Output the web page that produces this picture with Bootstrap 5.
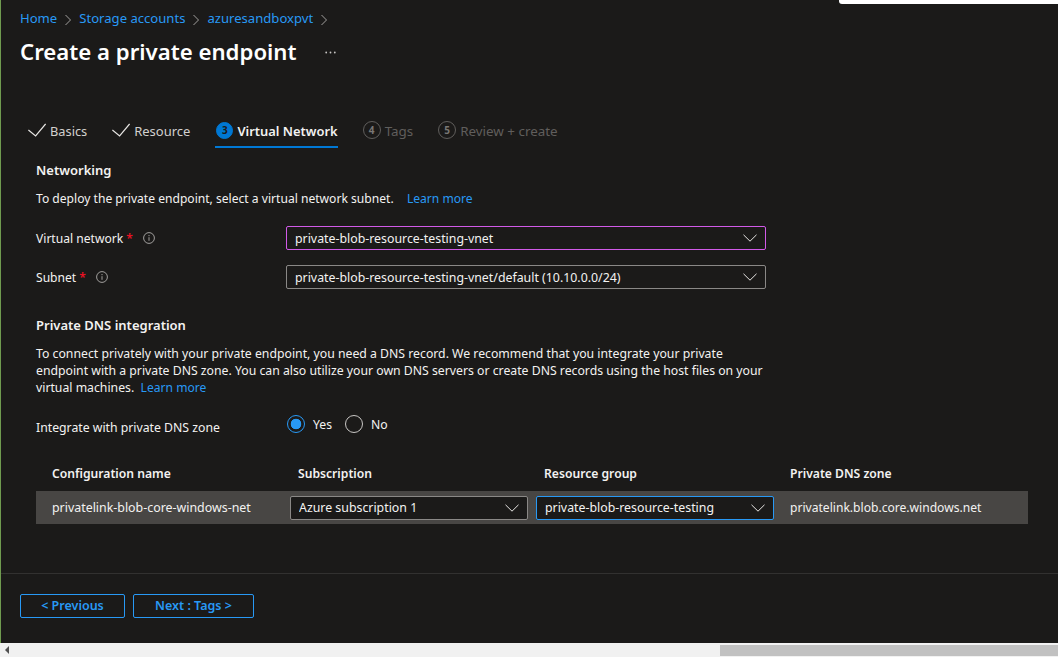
<!DOCTYPE html>
<html lang="en">
<head>
<meta charset="utf-8">
<title>Create a private endpoint</title>
<link href="https://cdn.jsdelivr.net/npm/bootstrap@5.3.0/dist/css/bootstrap.min.css" rel="stylesheet">
<style>
html,body{height:100%;overflow:hidden}
body{background:#1b1a19;color:#f3f2f1;font-family:"Noto Sans","Open Sans","Liberation Sans",sans-serif;font-size:12.2px;line-height:18px}
a{color:#2899f5;text-decoration:none}
.shell{height:657px;position:relative}
.notch{position:absolute;top:0;right:0;width:219px;height:4px;background:#fff;border-bottom-left-radius:3px}
.page-main{height:643px;padding:0 30px 0 19px;border-left:1px solid #6f9b4f}
.crumbs{--bs-breadcrumb-divider:url("data:image/svg+xml,%3Csvg xmlns='http://www.w3.org/2000/svg' width='8' height='12'%3E%3Cpath d='M1.5 1l5 5-5 5' fill='none' stroke='%23a19f9d'/%3E%3C/svg%3E");--bs-breadcrumb-item-padding-x:7px;--bs-breadcrumb-margin-bottom:0;padding-top:9px;height:27px;font-size:13.1px}
.crumbs .breadcrumb-item+.breadcrumb-item::before{padding-top:3px}
.page-title{font-size:22.2px;font-weight:600;line-height:32px;margin:9px 0 0;color:#fff}
.more-dots{width:11px;height:3px;margin:9px 0 0 28px;flex:none}
.wizard{margin-top:46px;height:34px;gap:25px}
.wizard .nav-link{padding:2px 0 0;height:34px;display:flex;align-items:center;gap:4px;color:#d2d0ce;border-bottom:2px solid transparent;font-size:12.8px}
.wizard .nav-link svg{margin-bottom:2px}
.wizard .second-step .nav-link{font-size:13px}
.wizard .nav-link.active{color:#f3f2f1;font-weight:600;border-bottom-color:#0078d4;font-size:12.9px}
.wizard .nav-link.disabled{color:#605e5c;font-size:13.4px}
.wizard .first-step{margin-left:8px}
.step-num{width:18px;height:18px;margin-bottom:2px;border-radius:50%;display:flex;align-items:center;justify-content:center;font-size:10px;font-weight:700;border:1px solid #605e5c;color:#797775}
.active .step-num{width:17px;height:17px;margin-left:1px;background:#0078d4;border-color:#0078d4;color:#1b1a19}
.form-area{padding-left:16px}
.sect-head{font-size:13px;font-weight:600;line-height:20px;margin:0}
.net-head{margin-top:12px}
.intro-a{margin:10px 0 0;font-size:12.1px}
.intro-a a{margin-left:7px}
.field-row{display:flex;align-items:center;height:24px}
.vnet-row{margin-top:18px}
.subnet-row{margin-top:15px}
.field-label{width:250px;display:flex;align-items:center;gap:3px;font-size:12.1px}
.field-row .field-label{padding-top:2px}
.field-row .info-dot{margin-bottom:2px}
.req{color:#e81123;font-weight:600}
.info-dot{width:12px;height:12px;margin-left:7px;flex:none}
.dark-select.form-select{height:24px;min-height:0;padding:0 30px 0 8px;font-size:12.35px;line-height:20px;color:#f3f2f1;background-color:#1b1a19;border:1px solid #8a8886;border-radius:2px;background-image:url("data:image/svg+xml,%3Csvg xmlns='http://www.w3.org/2000/svg' width='14' height='8'%3E%3Cpath d='M.5.8L7 7.2 13.5.8' fill='none' stroke='%23e8e6e4'/%3E%3C/svg%3E");background-size:14px 8px;background-position:right 8px center}
.dark-select.form-select.wide-sel{width:480px;padding-top:2px}
.dark-select.is-pink{border-color:#d15ae8}
.dark-select.is-blue{border-color:#2899f5}
.dns-head{margin-top:26px}
.intro-b{width:735px;margin:10px 0 0;font-size:12.25px;line-height:17px}
.intro-b a{font-size:12.1px}
.radio-row{display:flex;align-items:flex-start;margin-top:19px;height:36px}
.radio-row .field-label{margin-top:4px;font-size:12.25px}
.radio-row .form-check{margin:0 0 0 1px;padding:0;min-height:0;display:flex;align-items:center;gap:8px}
.radio-row .form-check+.form-check{margin-left:13px}
.radio-row .form-check-input{float:none;margin:0;width:18px;height:18px;background-color:transparent;border:1.5px solid #c8c6c4}
.radio-row .form-check-input:checked{border-color:#2899f5;background-image:radial-gradient(circle,#2899f5 5px,transparent 5.6px)}
.radio-row .form-check-label{line-height:14px;padding-top:2px;color:#f3f2f1}
.cfg-grid{display:grid;grid-template-columns:repeat(4,246px);padding-left:8px;width:992px}
.cfg-head{margin-top:10px;height:30px;padding-bottom:4px;align-items:center;font-weight:600;font-size:12.15px}
.cfg-head>div{padding-left:8px}
.cfg-row{height:33px;background:#484644;align-items:center}
.cfg-row>.cfg-text{padding-left:8px;font-size:12.1px}
.cfg-row>.cfg-first{font-size:12.4px}
.cfg-row .dark-select.form-select{width:238px}
.foot-line{border-top:1px solid #323130;margin:49px -30px 0 -19px}
.foot-btns{margin-top:20px;gap:8px}
.foot-btns .btn{--bs-btn-color:#2899f5;--bs-btn-border-color:#2899f5;--bs-btn-hover-bg:transparent;--bs-btn-hover-color:#2899f5;--bs-btn-hover-border-color:#2899f5;height:24px;padding:0;font-size:12.5px;font-weight:600;line-height:20px;border-radius:2px}
.btn-prev{width:105px}
.btn-next{width:121px}
.h-scroll{height:14px;background:#f1f1f1;position:relative;display:flex;align-items:center;padding-left:5px}
.scroll-thumb{position:absolute;left:720px;right:0;top:2px;bottom:1px;background:#c1c1c1}
.scroll-arrow{width:4px;height:8px;flex:none}
</style>
</head>
<body>
<div class="shell d-flex flex-column">
  <div class="notch"></div>
  <main class="page-main">
    <nav aria-label="breadcrumb">
      <ol class="breadcrumb crumbs">
        <li class="breadcrumb-item"><a href="#">Home</a></li>
        <li class="breadcrumb-item"><a href="#">Storage accounts</a></li>
        <li class="breadcrumb-item"><a href="#">azuresandboxpvt</a></li>
        <li class="breadcrumb-item"></li>
      </ol>
    </nav>
    <div class="d-flex align-items-center">
      <h1 class="page-title">Create a private endpoint</h1>
      <svg class="more-dots" viewBox="0 0 11 3"><circle cx="1.2" cy="1.5" r=".9" fill="#c8c6c4"/><circle cx="5.5" cy="1.5" r=".9" fill="#c8c6c4"/><circle cx="9.8" cy="1.5" r=".9" fill="#c8c6c4"/></svg>
    </div>
    <ul class="nav wizard">
      <li class="nav-item first-step"><a class="nav-link" href="#"><svg width="18" height="14" viewBox="0 0 18 14"><path d="M.4 7L7.6 13 17.6 1" fill="none" stroke="#e8e6e4" stroke-width="1.2"/></svg>Basics</a></li>
      <li class="nav-item second-step"><a class="nav-link" href="#"><svg width="18" height="14" viewBox="0 0 18 14"><path d="M.4 7L7.6 13 17.6 1" fill="none" stroke="#e8e6e4" stroke-width="1.2"/></svg>Resource</a></li>
      <li class="nav-item"><a class="nav-link active" href="#"><span class="step-num">3</span>Virtual Network</a></li>
      <li class="nav-item"><a class="nav-link disabled" href="#"><span class="step-num">4</span>Tags</a></li>
      <li class="nav-item"><a class="nav-link disabled" href="#"><span class="step-num">5</span>Review + create</a></li>
    </ul>
    <div class="form-area">
      <h2 class="sect-head net-head">Networking</h2>
      <p class="intro-a">To deploy the private endpoint, select a virtual network subnet.&nbsp; <a href="#">Learn more</a></p>
      <div class="field-row vnet-row">
        <div class="field-label">Virtual network <span class="req">*</span>
          <svg class="info-dot" viewBox="0 0 12 12"><circle cx="6" cy="6" r="5.4" fill="none" stroke="#a19f9d"/><path d="M6 5.2v3.6M6 3v1.2" stroke="#a19f9d"/></svg></div>
        <select class="form-select dark-select wide-sel is-pink"><option>private-blob-resource-testing-vnet</option></select>
      </div>
      <div class="field-row subnet-row">
        <div class="field-label">Subnet <span class="req">*</span>
          <svg class="info-dot" viewBox="0 0 12 12"><circle cx="6" cy="6" r="5.4" fill="none" stroke="#a19f9d"/><path d="M6 5.2v3.6M6 3v1.2" stroke="#a19f9d"/></svg></div>
        <select class="form-select dark-select wide-sel"><option>private-blob-resource-testing-vnet/default (10.10.0.0/24)</option></select>
      </div>
      <h2 class="sect-head dns-head">Private DNS integration</h2>
      <p class="intro-b">To connect privately with your private endpoint, you need a DNS record. We recommend that you integrate your private endpoint with a private DNS zone. You can also utilize your own DNS servers or create DNS records using the host files on your virtual machines.&nbsp; <a href="#">Learn more</a></p>
      <div class="radio-row">
        <div class="field-label">Integrate with private DNS zone</div>
        <div class="form-check"><input class="form-check-input" type="radio" name="dnszone" id="dnsYes" checked><label class="form-check-label" for="dnsYes">Yes</label></div>
        <div class="form-check"><input class="form-check-input" type="radio" name="dnszone" id="dnsNo"><label class="form-check-label" for="dnsNo">No</label></div>
      </div>
    </div>
    <div class="form-area">
      <div class="cfg-grid cfg-head">
        <div>Configuration name</div><div>Subscription</div><div>Resource group</div><div>Private DNS zone</div>
      </div>
      <div class="cfg-grid cfg-row">
        <div class="cfg-text cfg-first">privatelink-blob-core-windows-net</div>
        <div><select class="form-select dark-select"><option>Azure subscription 1</option></select></div>
        <div><select class="form-select dark-select is-blue"><option>private-blob-resource-testing</option></select></div>
        <div class="cfg-text">privatelink.blob.core.windows.net</div>
      </div>
    </div>
    <div class="foot-line"></div>
    <div class="d-flex foot-btns">
      <button type="button" class="btn btn-outline-primary btn-prev">&lt; Previous</button>
      <button type="button" class="btn btn-outline-primary btn-next">Next : Tags &gt;</button>
    </div>
  </main>
  <div class="h-scroll">
    <svg class="scroll-arrow" viewBox="0 0 4 8"><path d="M4 0v8L0 4z" fill="#505050"/></svg>
    <div class="scroll-thumb"></div>
  </div>
</div>
</body>
</html>
